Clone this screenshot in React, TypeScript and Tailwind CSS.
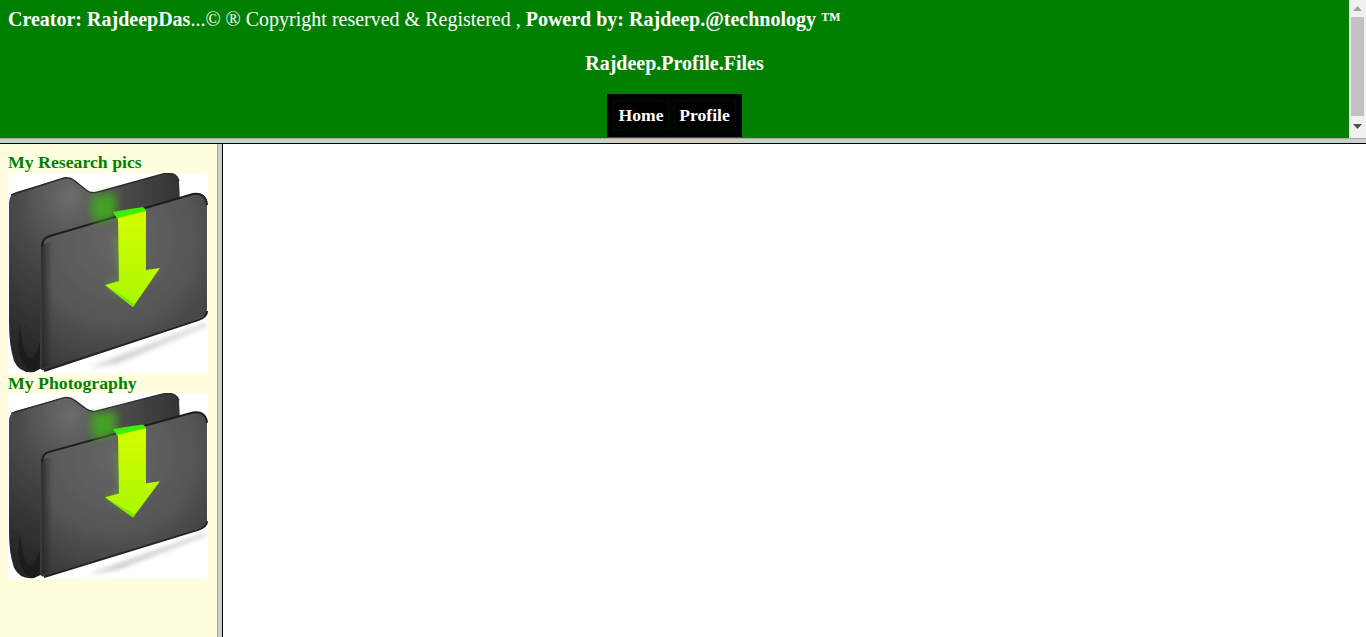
import React from "react";

function Folder({ id, h }: { id: string; h: number }) {
  return (
    <svg width={200} height={h} viewBox="0 0 200 200" preserveAspectRatio="none" className="block bg-white">
      <defs>
        <radialGradient id={id + "back"} cx="0.36" cy="0.12" r="0.85">
          <stop offset="0" stopColor="#6c6c6c" />
          <stop offset="0.4" stopColor="#484848" />
          <stop offset="1" stopColor="#252525" />
        </radialGradient>
        <radialGradient id={id + "front"} cx="0.45" cy="0.25" r="0.85">
          <stop offset="0" stopColor="#666666" />
          <stop offset="0.55" stopColor="#565656" />
          <stop offset="1" stopColor="#363636" />
        </radialGradient>
        <linearGradient id={id + "edge"} x1="0" y1="0" x2="1" y2="0">
          <stop offset="0" stopColor="#232323" stopOpacity="0.8" />
          <stop offset="1" stopColor="#232323" stopOpacity="0" />
        </linearGradient>
        <linearGradient id={id + "arrow"} x1="0" y1="0" x2="0" y2="1">
          <stop offset="0" stopColor="#d4fc00" />
          <stop offset="1" stopColor="#aaf700" />
        </linearGradient>
        <filter id={id + "blur"} x="-50%" y="-50%" width="200%" height="200%">
          <feGaussianBlur stdDeviation="4" />
        </filter>
        <filter id={id + "soft"} x="-20%" y="-50%" width="140%" height="200%">
          <feGaussianBlur stdDeviation="2.5" />
        </filter>
        <filter id={id + "s1"} x="-5%" y="-5%" width="110%" height="110%">
          <feGaussianBlur stdDeviation="0.7" />
        </filter>
      </defs>
      <path d="M80 195 L198 150 L198 153 L110 190 Z" fill="#cccccc" filter={`url(#${id}soft)`} />
      <g filter={`url(#${id}s1)`}>
        <path
          d="M1 30 Q1 22 8 19 L56 5 Q62 4 67 8 L78 17 Q83 21 90 19 L155 1 Q168 -2 171 8 L172 30 L50 70 L34 195 L26 199 Q12 201 6 188 Q1 172 1 150 Z"
          fill={`url(#${id}back)`}
        />
        <path d="M3 22 L56 5 Q62 4 67 8 L78 17 Q83 21 90 19 L155 1 Q168 -2 171 8" fill="none" stroke="#2a2a2a" strokeWidth="1.4" />
        <path d="M10 172 Q13 196 26 199 L34 194 L32 170 Q26 190 20 184 Q14 178 12 150 Z" fill="#141414" opacity="0.6" />
        <path
          d="M34 72 Q34 65 42 63 L185 21 Q198 19 199 32 L199 136 Q199 143 190 146 L38 197 Q30 199 32 188 Z"
          fill={`url(#${id}front)`}
        />
        <path d="M33 72 L44 68 L44 192 L34 195 Z" fill={`url(#${id}edge)`} />
        <path d="M34 74 Q34 65 42 63 L185 21 Q198 19 199 32" fill="none" stroke="#1e1e1e" strokeWidth="2" />
        <path d="M199 138 Q199 144 190 147 L36 198" fill="none" stroke="#202020" strokeWidth="2.2" />
      </g>
      <path d="M83 23 L108 20 L108 44 L85 50 Z" fill="#3fae1a" opacity="0.85" filter={`url(#${id}blur)`} />
      <path d="M108 60 L112 108 L98 112 L122 128 L115 70 Z" fill="#5fc61a" opacity="0.6" filter={`url(#${id}blur)`} />
      <path d="M105 39 Q120 36 135 34 L138 37 L138 42 L110 47 Z" fill="#3cf000" />
      <path d="M110 45 L138 38 L138 97 L152 95 L125 134 L97 112 L111 108 Z" fill={`url(#${id}arrow)`} />
      <path d="M97 112 L125 134 L127 131 Z" fill="#7ce800" />
    </svg>
  );
}

export default function App() {
  return (
    <div className="h-[637px] w-[1366px] overflow-hidden flex flex-col bg-white font-['Liberation_Serif',serif]">
      <div className="h-[138px] flex bg-[#008000]">
        <div className="flex-1 text-white text-[20px] leading-[23px] font-bold">
          <p className="pl-2 pt-[8px]">
            Creator: RajdeepDas<span className="font-normal">...© ® Copyright reserved &amp; Registered ,</span> Powerd by: Rajdeep.@technology ™
          </p>
          <p className="text-center mt-[21px]">Rajdeep.Profile.Files</p>
          <div className="flex justify-center mt-[19px]">
            <nav className="flex h-[43px] w-[135px] bg-black pt-[6px] pl-[6px] gap-[5px] text-[17.6px]">
              <a className="h-[30px] w-[56px] flex items-center justify-center border border-[#001400]">Home</a>
              <a className="h-[30px] w-[62px] pr-[1px] flex items-center justify-center border border-[#001400]">Profile</a>
            </nav>
          </div>
        </div>
        <div className="w-[17px] bg-[#f1f1f1] flex flex-col items-center">
          <div className="h-[17px] flex items-center justify-center">
            <svg width="9" height="5" viewBox="0 0 9 5"><path d="M4.5 0 L9 5 H0 Z" fill="#a3a3a3" /></svg>
          </div>
          <div className="h-[99px] w-[13px] bg-[#c1c1c1]" />
          <div className="h-[22px] flex items-center justify-center pb-[1px]">
            <svg width="9" height="5" viewBox="0 0 9 5"><path d="M0 0 H9 L4.5 5 Z" fill="#505050" /></svg>
          </div>
        </div>
      </div>
      <div className="h-[6px] shrink-0 bg-[#cfcfcf] border-t border-t-[#a8a8a8] border-b border-b-black" />
      <div className="flex-1 flex min-h-0">
        <aside className="w-[217px] bg-[#ffffe0] pt-2 pl-2 text-[17.75px] leading-[20.5px] font-bold text-[#008000]">
          <div>My Research pics</div>
          <Folder id="a" h={200} />
          <div>My Photography</div>
          <Folder id="b" h={186} />
        </aside>
        <div className="w-[6px] bg-[#cfcfcf] border-l border-l-[#a8a8a8] border-r border-r-black" />
        <main className="flex-1 bg-white" />
      </div>
    </div>
  );
}
